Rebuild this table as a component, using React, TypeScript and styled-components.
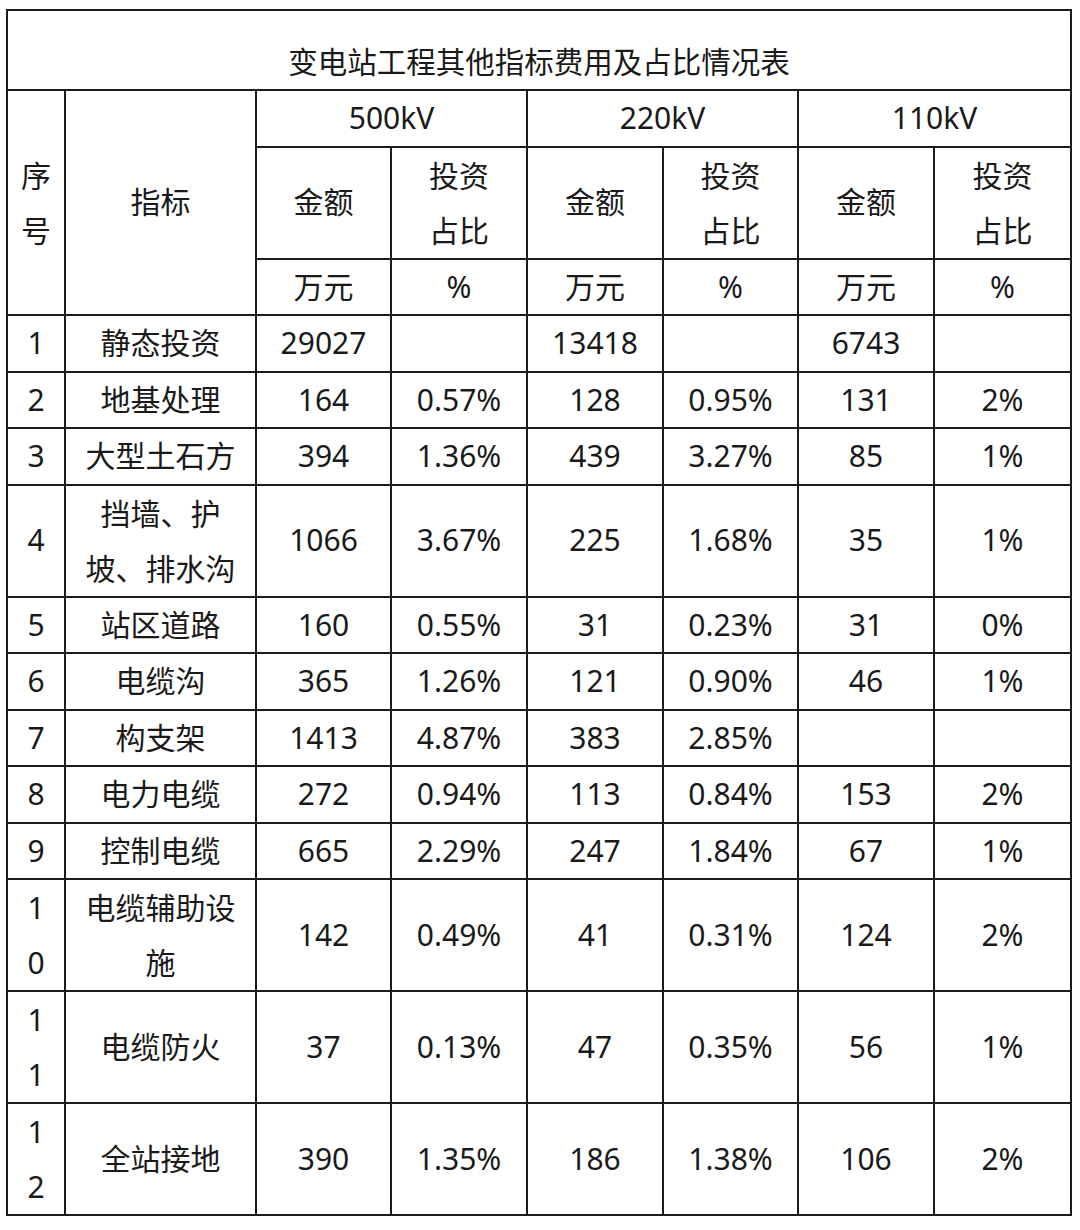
import React from "react";
import styled, { createGlobalStyle } from "styled-components";

const GlobalStyle = createGlobalStyle`
  html, body {
    margin: 0;
    padding: 0;
    background: #ffffff;
  }
  body {
    font-family: "Noto Sans", "Noto Sans CJK SC", sans-serif;
    color: #1a1a1a;
  }
`;

const Wrapper = styled.div`
  padding: 9px 0 0 6px;
`;

const Table = styled.table`
  border-collapse: collapse;
  table-layout: fixed;
  width: 1066px;
  font-size: 30px;
`;

const TitleCell = styled.td`
  border: 2px solid #1c1c1c;
  padding: 31px 0 7px;
  line-height: 40px;
  text-align: center;
  font-size: 29.5px;
`;

const Cell = styled.td`
  border: 2px solid #1c1c1c;
  padding: 0;
  line-height: 54.5px;
  text-align: center;
  vertical-align: middle;
  white-space: nowrap;
`;

// two stacked lines inside a cell
const TwoLines = styled.span`
  display: block;
  line-height: 55px;
`;

const widths = [58, 191, 135, 136, 136, 135, 136, 137];

type Row = {
  no: React.ReactNode;
  name: React.ReactNode;
  values: string[];
};

const pair = (a: string, b: string) => (
  <TwoLines>
    {a}
    <br />
    {b}
  </TwoLines>
);

const rows: Row[] = [
  { no: "1", name: "静态投资", values: ["29027", "", "13418", "", "6743", ""] },
  { no: "2", name: "地基处理", values: ["164", "0.57%", "128", "0.95%", "131", "2%"] },
  { no: "3", name: "大型土石方", values: ["394", "1.36%", "439", "3.27%", "85", "1%"] },
  {
    no: "4",
    name: pair("挡墙、护", "坡、排水沟"),
    values: ["1066", "3.67%", "225", "1.68%", "35", "1%"],
  },
  { no: "5", name: "站区道路", values: ["160", "0.55%", "31", "0.23%", "31", "0%"] },
  { no: "6", name: "电缆沟", values: ["365", "1.26%", "121", "0.90%", "46", "1%"] },
  { no: "7", name: "构支架", values: ["1413", "4.87%", "383", "2.85%", "", ""] },
  { no: "8", name: "电力电缆", values: ["272", "0.94%", "113", "0.84%", "153", "2%"] },
  { no: "9", name: "控制电缆", values: ["665", "2.29%", "247", "1.84%", "67", "1%"] },
  {
    no: pair("1", "0"),
    name: pair("电缆辅助设", "施"),
    values: ["142", "0.49%", "41", "0.31%", "124", "2%"],
  },
  {
    no: pair("1", "1"),
    name: "电缆防火",
    values: ["37", "0.13%", "47", "0.35%", "56", "1%"],
  },
  {
    no: pair("1", "2"),
    name: "全站接地",
    values: ["390", "1.35%", "186", "1.38%", "106", "2%"],
  },
];

const voltages = ["500kV", "220kV", "110kV"];

const App = () => {
  return (
    <Wrapper>
      <GlobalStyle />
      <Table>
        <colgroup>
          {widths.map((w, i) => (
            <col key={i} style={{ width: w }} />
          ))}
        </colgroup>
        <tbody>
          <tr>
            <TitleCell colSpan={8}>变电站工程其他指标费用及占比情况表</TitleCell>
          </tr>
          <tr>
            <Cell rowSpan={3}>{pair("序", "号")}</Cell>
            <Cell rowSpan={3}>指标</Cell>
            {voltages.map((v) => (
              <Cell key={v} colSpan={2}>
                {v}
              </Cell>
            ))}
          </tr>
          <tr>
            {voltages.map((v) => (
              <React.Fragment key={v}>
                <Cell>金额</Cell>
                <Cell>{pair("投资", "占比")}</Cell>
              </React.Fragment>
            ))}
          </tr>
          <tr>
            {voltages.map((v) => (
              <React.Fragment key={v}>
                <Cell>万元</Cell>
                <Cell>%</Cell>
              </React.Fragment>
            ))}
          </tr>
          {rows.map((r, i) => (
            <tr key={i}>
              <Cell>{r.no}</Cell>
              <Cell>{r.name}</Cell>
              {r.values.map((v, j) => (
                <Cell key={j}>{v}</Cell>
              ))}
            </tr>
          ))}
        </tbody>
      </Table>
    </Wrapper>
  );
};

export default App;
